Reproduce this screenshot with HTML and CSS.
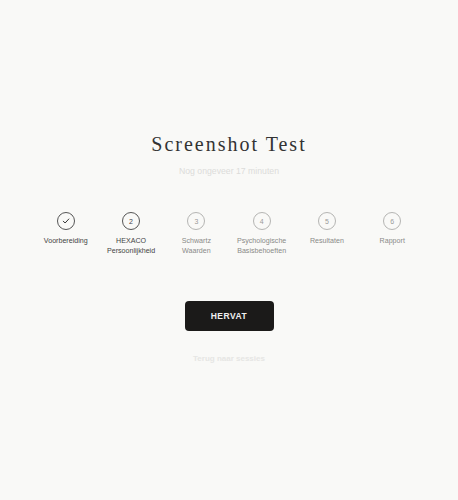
FILE: index.html
```html
<!DOCTYPE html>
<html lang="nl">
<head>
<meta charset="utf-8">
<link rel="stylesheet" href="styles.css">
</head>
<body>
<main class="page">
  <h1 class="title">Screenshot Test</h1>
  <p class="subtitle">Nog ongeveer 17 minuten</p>
  <ol class="steps">
    <li class="step done">
      <span class="circle"><svg width="8" height="8" viewBox="0 0 8 8"><path d="M1.3 4.2 L3.1 6 L6.8 2" fill="none" stroke="#333" stroke-width="1" stroke-linecap="round" stroke-linejoin="round"/></svg></span>
      <span class="label">Voorbereiding</span>
    </li>
    <li class="step current">
      <span class="circle">2</span>
      <span class="label">HEXACO<br>Persoonlijkheid</span>
    </li>
    <li class="step">
      <span class="circle">3</span>
      <span class="label">Schwartz<br>Waarden</span>
    </li>
    <li class="step">
      <span class="circle">4</span>
      <span class="label">Psychologische<br>Basisbehoeften</span>
    </li>
    <li class="step">
      <span class="circle">5</span>
      <span class="label">Resultaten</span>
    </li>
    <li class="step">
      <span class="circle">6</span>
      <span class="label">Rapport</span>
    </li>
  </ol>
  <button class="resume">HERVAT</button>
  <a class="back" href="#">Terug naar sessies</a>
</main>
</body>
</html>
```
FILE: styles.css
```css
html, body {
  margin: 0;
  padding: 0;
  background: #f9f9f7;
}
body {
  width: 458px;
  height: 500px;
  font-family: "Liberation Sans", Arial, sans-serif;
}
.page {
  display: flex;
  flex-direction: column;
  align-items: center;
  padding-top: 132px;
}
.title {
  margin: 0;
  font-family: "Liberation Serif", "Times New Roman", serif;
  font-weight: normal;
  font-size: 20px;
  line-height: 24px;
  letter-spacing: 2px;
  color: #333;
  padding-left: 0;
}
.subtitle {
  margin: 9px 0 0;
  font-size: 8.7px;
  line-height: 12px;
  color: #dcdcda;
}
.steps {
  list-style: none;
  margin: 35px 0 0;
  padding: 0;
  display: flex;
  height: 89px;
}
.step {
  width: 65.3px;
  display: flex;
  flex-direction: column;
  align-items: center;
}
.circle {
  box-sizing: border-box;
  width: 18px;
  height: 18px;
  border-radius: 50%;
  border: 1px solid #b5b5b3;
  display: flex;
  align-items: center;
  justify-content: center;
  font-size: 7px;
  color: #9a9a98;
}
.step.done .circle,
.step.current .circle {
  border-color: #555;
  color: #444;
}
.label {
  margin-top: 6px;
  font-size: 7.1px;
  line-height: 10px;
  text-align: center;
  color: #8a8a88;
}
.step.done .label,
.step.current .label {
  color: #444;
}
.resume {
  width: 89px;
  height: 30px;
  border: none;
  border-radius: 4px;
  background: #1b1a19;
  color: #f0f0f0;
  font-family: "Liberation Sans", Arial, sans-serif;
  font-weight: bold;
  font-size: 8.5px;
  letter-spacing: 0.5px;
  padding: 0;
}
.back {
  margin-top: 22px;
  font-size: 8px;
  line-height: 12px;
  font-weight: bold;
  color: #e6e6e4;
  text-decoration: none;
}
```
